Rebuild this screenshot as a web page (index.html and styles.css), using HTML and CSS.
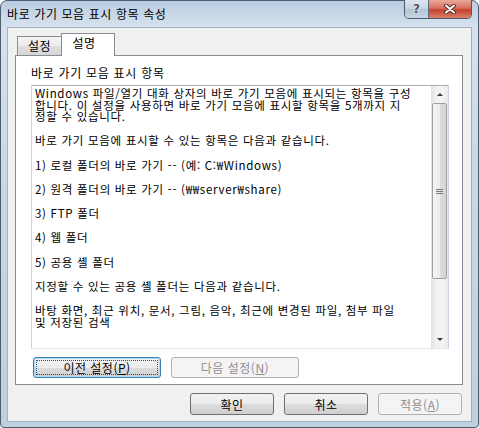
FILE: index.html
```html
<!DOCTYPE html>
<html lang="ko">

<head>
    <meta charset="UTF-8">
    <title>바로 가기 모음 표시 항목 속성</title>
    <link rel="stylesheet" href="styles.css">
</head>

<body>
    <div class="window">
        <div class="titlebar">
            <span class="title">바로 가기 모음 표시 항목 속성</span>
            <div class="caption">
                <span class="cap-btn help">?</span>
                <span class="cap-btn close">
                    <svg width="14" height="10" viewBox="0 0 14 10">
                        <path d="M3 1.5 L11 8.5 M11 1.5 L3 8.5" stroke="#5a2a22" stroke-width="4" stroke-linecap="round"/>
                        <path d="M3 1.5 L11 8.5 M11 1.5 L3 8.5" stroke="#ffffff" stroke-width="2" stroke-linecap="round"/>
                    </svg>
                </span>
            </div>
        </div>

        <div class="client">
            <div class="tabs">
                <div class="tab">설정</div>
                <div class="tab active">설명</div>
            </div>

            <div class="panel">
                <div class="label">바로 가기 모음 표시 항목</div>

                <div class="textbox">
                    <div class="text">
                        <p>Windows 파일/열기 대화 상자의 바로 가기 모음에 표시되는 항목을 구성<br>합니다. 이 설정을 사용하면 바로 가기 모음에 표시할 항목을 5개까지 지<br>정할 수 있습니다.</p>
                        <p>바로 가기 모음에 표시할 수 있는 항목은 다음과 같습니다.</p>
                        <p>1) 로컬 폴더의 바로 가기 -- (예: C:₩Windows)</p>
                        <p>2) 원격 폴더의 바로 가기 -- (₩₩server₩share)</p>
                        <p>3) FTP 폴더</p>
                        <p>4) 웹 폴더</p>
                        <p>5) 공용 셸 폴더</p>
                        <p>지정할 수 있는 공용 셸 폴더는 다음과 같습니다.</p>
                        <p>바탕 화면, 최근 위치, 문서, 그림, 음악, 최근에 변경된 파일, 첨부 파일<br>및 저장된 검색</p>
                    </div>
                    <div class="scrollbar">
                        <div class="arrow up"></div>
                        <div class="thumb"><span class="grip"></span></div>
                        <div class="track"></div>
                        <div class="arrow down"></div>
                    </div>
                </div>

                <div class="nav-buttons">
                    <button class="btn focused"><span class="focus-ring">이전 설정(<u>P</u>)</span></button>
                    <button class="btn" disabled>다음 설정(<u>N</u>)</button>
                </div>
            </div>

            <div class="dialog-buttons">
                <button class="btn">확인</button>
                <button class="btn">취소</button>
                <button class="btn" disabled>적용(<u>A</u>)</button>
            </div>
        </div>
    </div>
</body>

</html>
```

FILE: styles.css
```css
body {
    margin: 0;
    padding: 0;
    font-family: "Noto Sans CJK KR", "Noto Sans", sans-serif;
    font-size: 12px;
    color: #000;
    background-color: #ffffff;
}

.window {
    width: 479px;
    height: 428px;
    box-sizing: border-box;
    border: 1px solid #4e5e6e;
    border-radius: 7px 7px 4px 4px;
    background: linear-gradient(to bottom, #b9cde1 0%, #d6e1ec 6%, #cad8e6 40%, #bfd0e1 100%);
    padding: 0 6px 5px 6px;
    display: flex;
    flex-direction: column;
}

.titlebar {
    height: 26px;
    display: flex;
    align-items: flex-start;
}

.title {
    margin-top: 4px;
    line-height: 18px;
    letter-spacing: 0.6px;
    color: #000;
}

.caption {
    margin-left: auto;
    margin-top: -1px;
    display: flex;
    border: 1px solid #4c5b6a;
    border-top: none;
    border-radius: 0 0 5px 5px;
    overflow: hidden;
    height: 18px;
}

.cap-btn {
    display: flex;
    align-items: center;
    justify-content: center;
}

.help {
    width: 23px;
    background: linear-gradient(to bottom, #dde6ef 0%, #c6d4e2 50%, #b3c4d5 51%, #c5d5e4 100%);
    border-right: 1px solid #5c6b7a;
    font-family: "DejaVu Sans", sans-serif;
    font-size: 12px;
    font-weight: bold;
    color: #4b5866;
    text-shadow: 0 0 2px #ffffff;
}

.close {
    width: 42px;
    background: linear-gradient(to bottom, #e9a99c 0%, #d7705f 45%, #c4412f 55%, #d9806b 100%);
}

.client {
    flex: 1;
    background-color: #f0f0f0;
    border: 1px solid #a3b1c0;
    padding: 5px 8px 0 7px;
    display: flex;
    flex-direction: column;
}

.tabs {
    display: flex;
    align-items: flex-end;
    padding-left: 2px;
    margin-bottom: -1px;
    position: relative;
    z-index: 1;
    height: 23px;
}

.tab {
    box-sizing: border-box;
    width: 45px;
    height: 19px;
    margin-bottom: 1px;
    border: 1px solid #898c95;
    border-bottom: none;
    background: linear-gradient(to bottom, #f4f4f4 0%, #ebebeb 50%, #dedede 51%, #d6d6d6 100%);
    text-align: center;
    line-height: 18px;
    letter-spacing: 0.5px;
}

.tab.active {
    width: 54px;
    height: 23px;
    margin-bottom: 0;
    margin-left: -1px;
    background: #ffffff;
    line-height: 18px;
    padding-right: 8px;
}

.panel {
    height: 330px;
    box-sizing: border-box;
    background-color: #ffffff;
    border: 1px solid #898c95;
    padding: 9px 13px 0 15px;
    display: flex;
    flex-direction: column;
}

.label {
    line-height: 16px;
    height: 16px;
    letter-spacing: 0.7px;
}

.textbox {
    margin-top: 4px;
    height: 264px;
    box-sizing: border-box;
    border: 1px solid #abadb3;
    border-color: #abadb3 #c9d3de #dde6ef #c9d3de;
    display: flex;
}

.text {
    flex: 1;
    padding: 2px 0 0 3px;
    overflow: hidden;
    white-space: nowrap;
    font-size: 11.5px;
}

.text p {
    margin: 0 0 12.75px 0;
    line-height: 11.5px;
    letter-spacing: 0.7px;
}

.scrollbar {
    width: 17px;
    display: flex;
    flex-direction: column;
    background: linear-gradient(to right, #e3e3e3 0%, #f2f2f2 30%, #f4f4f4 70%, #e8e8e8 100%);
}

.arrow {
    height: 17px;
    display: flex;
    align-items: center;
    justify-content: center;
}

.arrow::after {
    content: "";
    width: 0;
    height: 0;
    border-left: 3px solid transparent;
    border-right: 3px solid transparent;
}

.arrow.up::after {
    border-bottom: 3px solid #3a3a3a;
}

.arrow.down::after {
    border-top: 3px solid #3a3a3a;
}

.thumb {
    height: 176px;
    margin: 0 1px;
    box-sizing: border-box;
    border: 1px solid #a0a0a0;
    border-radius: 2px;
    background: linear-gradient(to right, #f6f6f6 0%, #ececec 50%, #dcdcdc 51%, #d4d4d4 100%);
    display: flex;
    align-items: center;
    justify-content: center;
}

.grip {
    width: 7px;
    height: 5px;
    background: repeating-linear-gradient(to bottom, #7a7a7a 0, #7a7a7a 1px, transparent 1px, transparent 2px);
}

.track {
    flex: 1;
}

.btn {
    box-sizing: border-box;
    height: 22px;
    padding: 0;
    font-family: "Noto Sans CJK KR", "Noto Sans", sans-serif;
    font-size: 12px;
    letter-spacing: 0.5px;
    color: #000;
    border: 1px solid #707070;
    border-radius: 3px;
    background: linear-gradient(to bottom, #f2f2f2 0%, #ebebeb 50%, #dddddd 51%, #cfcfcf 100%);
}

.btn:disabled {
    color: #8d8d8d;
    border-color: #adb2b5;
    background: #f4f4f4;
}

.btn u {
    text-decoration-thickness: 1px;
    text-underline-offset: 1px;
}

.nav-buttons {
    margin-top: 8px;
    padding-left: 2px;
    display: flex;
    gap: 10px;
}

.nav-buttons .btn {
    width: 128px;
    height: 21px;
}

.btn.focused {
    border-color: #3c7fb1;
    box-shadow: inset 0 0 0 1px #a6dcf6;
    padding: 2px;
}

.focus-ring {
    display: block;
    height: 100%;
    box-sizing: border-box;
    border: 1px dotted #1f4f7a;
    line-height: 14px;
}

.dialog-buttons {
    margin-top: 8px;
    margin-right: 1px;
    display: flex;
    justify-content: flex-end;
    gap: 10px;
}

.dialog-buttons .btn {
    width: 84px;
}
```
